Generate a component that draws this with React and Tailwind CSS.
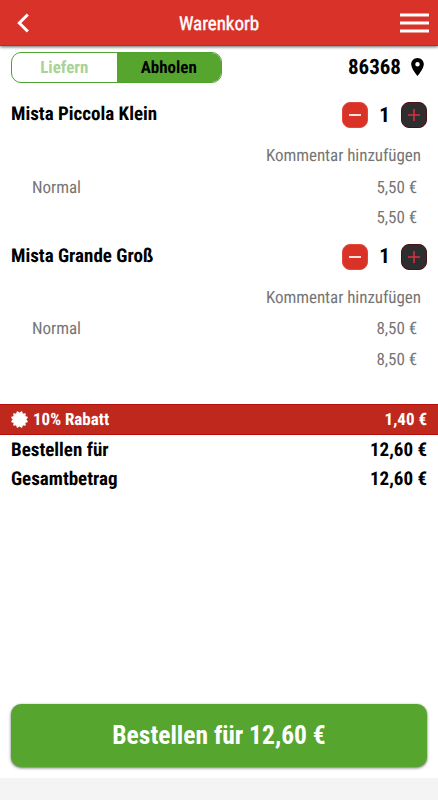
import React from "react";

function StepButton({ kind }) {
  const plus = kind === "plus";
  return (
    <button
      aria-label={kind}
      className={`flex h-[26px] w-[26px] items-center justify-center rounded-[8px] ${plus ? "border border-[#4d1017] bg-[#2e2e2e]" : "border border-[#e2493c] bg-[#d93226]"}`}
    >
      <svg width="12" height="12" viewBox="0 0 12 12" className="block" fill="none" stroke={plus ? "#dc3043" : "#ffffff"} strokeWidth={plus ? 1.5 : 1.7}>
        <path d="M0 6H12" />
        {plus && <path d="M6 0V12" />}
      </svg>
    </button>
  );
}

function CartItem({ name, price }) {
  return (
    <section className="h-[141.6px]">
      <div className="flex h-[26px] items-center justify-between pr-[11px] pl-[11px]">
        <span className="pb-[3px] text-[19px] font-bold">{name}</span>
        <div className="flex items-center">
          <StepButton kind="minus" />
          <span className="w-[33px] pt-[2px] text-center text-[21px] font-bold">1</span>
          <StepButton kind="plus" />
        </div>
      </div>
      <div className="mt-[13px] flex h-[31px] items-center justify-end pr-[17px] text-[17px] tracking-[-0.04px] text-[#757575]">Kommentar hinzufügen</div>
      <div className="flex h-[31px] items-center justify-between pt-px pr-[21px] pl-[32px] text-[17px] tracking-[-0.04px] text-[#757575]">
        <span>Normal</span>
        <span>{price}</span>
      </div>
      <div className="flex h-[31px] items-center justify-end pr-[21px] text-[17px] tracking-[-0.04px] text-[#757575]">{price}</div>
    </section>
  );
}

export default function App() {
  return (
    <div className="flex h-[800px] w-[438px] flex-col overflow-hidden bg-white leading-none whitespace-nowrap text-black [font-family:'Roboto_Condensed',Roboto,sans-serif] [font-stretch:75%] [text-rendering:geometricPrecision]">
      <header className="flex h-[46px] shrink-0 items-center justify-between border-b border-[#cf2213] bg-[#d93228] pr-[9px] pl-[17px] text-white shadow-[0_1px_3px_rgba(0,0,0,0.6)]">
        <svg width="21" height="20" viewBox="0 0 21 20" fill="none" stroke="currentColor" strokeWidth="3">
          <path d="M10.8 1.5L2.3 10L10.8 18.5" />
        </svg>
        <h1 className="pt-[2px] text-[19px] font-normal [-webkit-text-stroke:0.4px_white]">Warenkorb</h1>
        <svg width="29" height="20" viewBox="0 0 29 20" fill="currentColor">
          <path d="M0 .5H29V3.5H0zM0 8.5H29V11.5H0zM0 16.5H29V19.5H0z" />
        </svg>
      </header>

      <div className="mt-[6px] flex h-[31px] shrink-0 items-center justify-between pr-[14px] pl-[11px]">
        <div className="flex h-[31px] w-[211px] overflow-hidden rounded-[10px] border border-[#4ca42f] text-[17px] font-bold">
          <div className="flex flex-1 items-center justify-center pt-[2px] text-[#a9d297]">Liefern</div>
          <div className="flex flex-1 items-center justify-center bg-[#56a52f] pt-[2px]">Abholen</div>
        </div>
        <div className="flex items-center gap-[10px] text-[21px] font-bold">
          <span className="pt-[2px]">86368</span>
          <svg width="13" height="18" viewBox="5 2 14 20" fill="currentColor" className="mb-px">
            <path d="M12 2C8.13 2 5 5.13 5 9c0 5.25 7 13 7 13s7-7.75 7-13c0-3.87-3.13-7-7-7zm0 9.500a2.500 2.500 0 1 1 0-5 2.500 2.500 0 0 1 0 5z" />
          </svg>
        </div>
      </div>

      <main className="mt-[19px] h-[302px] shrink-0">
        <CartItem name="Mista Piccola Klein" price="5,50 €" />
        <CartItem name="Mista Grande Groß" price="8,50 €" />
      </main>

      <div className="flex h-[31px] shrink-0 items-center justify-between border-y border-[#b80d09] bg-[#bf281d] px-[11px] text-[17px] font-bold text-white">
        <div className="flex items-center gap-[5px]">
          <svg width="17" height="17" viewBox="-10 -10 20 20" fill="currentColor">
            <circle r="8" />
            {[0, 30, 60, 90, 120, 150, 180, 210, 240, 270, 300, 330].map((a) => (
              <path key={a} d="M-.6-10H.6L2.300-7.300H-2.300z" transform={`rotate(${a + 15})`} />
            ))}
          </svg>
          <span className="pt-[2px]">10% Rabatt</span>
        </div>
        <span className="pt-[2px]">1,40 €</span>
      </div>
      <div className="flex h-[29px] shrink-0 items-center justify-between px-[11px] text-[19px] font-bold">
        <span>Bestellen für</span>
        <span>12,60 €</span>
      </div>
      <div className="flex h-[28px] shrink-0 items-center justify-between px-[11px] text-[19px] font-bold">
        <span>Gesamtbetrag</span>
        <span>12,60 €</span>
      </div>

      <div className="mt-auto px-[11px] pb-[11px]">
        <button className="flex h-[63px] w-full items-center justify-center rounded-[10px] bg-[#56a52f] text-[25.5px] font-bold text-white shadow-[0_1px_3px_rgba(0,0,0,0.6)]">
          Bestellen für 12,60 €
        </button>
      </div>
      <footer className="h-[22px] shrink-0 bg-[#f4f4f4]" />
    </div>
  );
}
